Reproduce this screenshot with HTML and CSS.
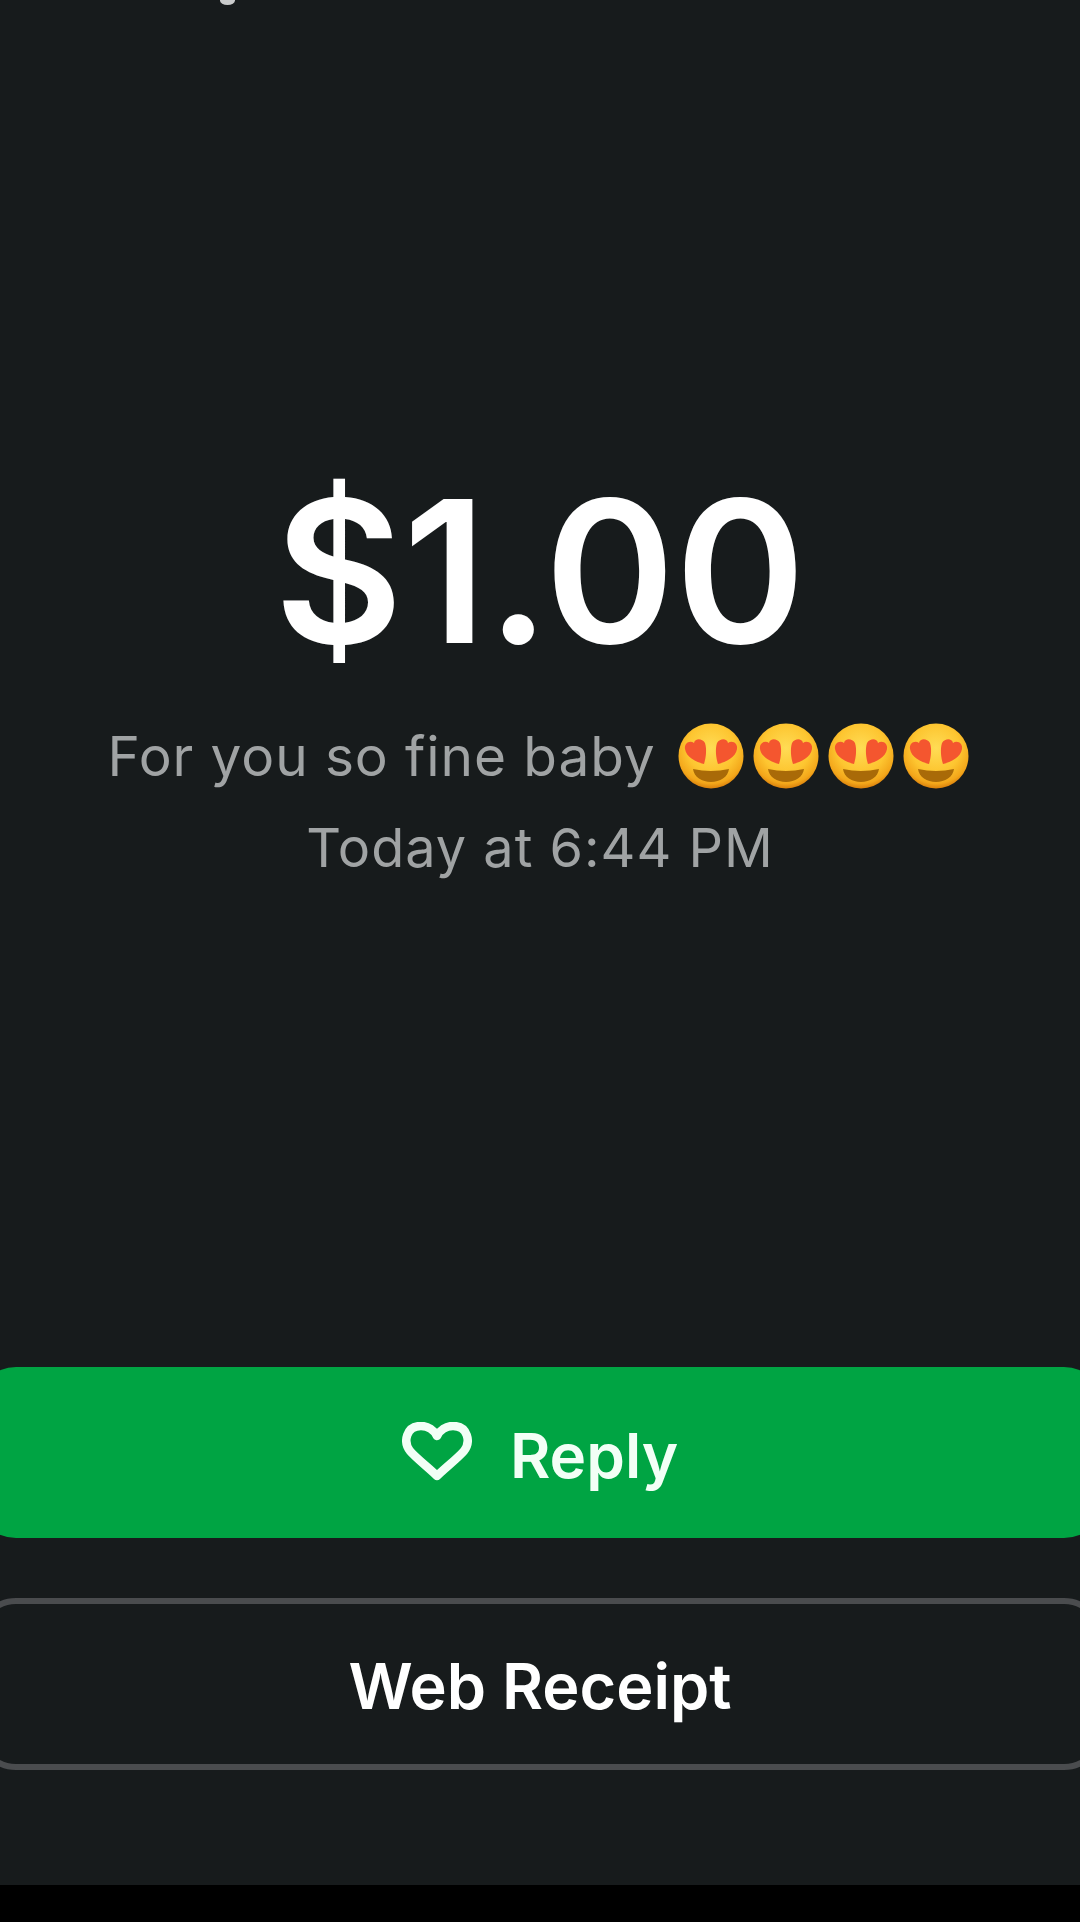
FILE: index.html
```html
<!DOCTYPE html>
<html lang="en">
<head>
<meta charset="utf-8">
<title>Payment</title>
<link rel="stylesheet" href="styles.css">
</head>
<body>
<svg width="0" height="0" class="defs" aria-hidden="true">
  <defs>
    <radialGradient id="face" cx="50%" cy="38%" r="62%">
      <stop offset="0" stop-color="#ffdc55"/>
      <stop offset="0.6" stop-color="#fdc530"/>
      <stop offset="0.88" stop-color="#f3a61a"/>
      <stop offset="1" stop-color="#d97f0c"/>
    </radialGradient>
    <symbol id="love" viewBox="0 0 66 66">
      <circle cx="33" cy="33" r="32.5" fill="url(#face)"/>
      <path d="M26 41C18 39 8 34 7 26C6 20 12 17 16 20C17 15 24 15 27 20C29 26 28 35 26 41Z" fill="#f4562f"/>
      <path d="M40 41C48 39 58 34 59 26C60 20 54 17 50 20C49 15 42 15 39 20C37 26 38 35 40 41Z" fill="#f4562f"/>
      <path d="M15 46Q33 50 51 46C50 54 42 59 33 59C24 59 16 54 15 46Z" fill="#a96a08"/>
    </symbol>
  </defs>
</svg>
<div class="screen">
  <span class="clipped-tail"></span>
  <main class="content">
    <h1 class="amount">$1.00</h1>
    <p class="note">
      <span>For you so fine baby</span>
      <span class="emojis">
        <svg class="emoji" role="img" aria-label="😍"><use href="#love"/></svg>
        <svg class="emoji" role="img" aria-label="😍"><use href="#love"/></svg>
        <svg class="emoji" role="img" aria-label="😍"><use href="#love"/></svg>
        <svg class="emoji" role="img" aria-label="😍"><use href="#love"/></svg>
      </span>
    </p>
    <p class="time">Today at 6:44 PM</p>
  </main>
  <div class="actions">
    <button class="btn btn-reply">
      <svg class="heart" viewBox="0 0 70 59" fill="none" stroke="currentColor" stroke-width="8.5" stroke-linejoin="round">
        <path d="M35 54C28 47 14 36 8 29C1 20 4 4 19 4C26 4 32 8 35 14C38 8 44 4 51 4C66 4 69 20 62 29C56 36 42 47 35 54Z"/>
      </svg>
      <span>Reply</span>
    </button>
    <button class="btn btn-receipt">Web Receipt</button>
  </div>
</div>
<div class="navbar"></div>
</body>
</html>
```
FILE: styles.css
```css
* { box-sizing: border-box; }
html, body { margin: 0; padding: 0; }
body {
  width: 1080px;
  height: 1922px;
  background: #000;
  font-family: Inter, "Liberation Sans", sans-serif;
  overflow: hidden;
  display: flex;
  flex-direction: column;
}
.defs { position: absolute; }
.screen {
  position: relative;
  height: 1885px;
  background: #171b1c;
  display: flex;
  flex-direction: column;
  overflow: hidden;
}
.clipped-tail {
  position: absolute;
  left: 220px;
  top: -4px;
  width: 15px;
  height: 9px;
  border-radius: 50%;
  background: #c9cbcb;
}
.content {
  padding-top: 451px;
  height: 1367px;
  display: flex;
  flex-direction: column;
  align-items: center;
}
.amount {
  margin: 0;
  color: #fff;
  font-size: 198px;
  font-weight: 600;
  line-height: 240px;
  letter-spacing: 0;
}
.note {
  margin: 25px 0 0;
  padding-right: 4px;
  display: flex;
  align-items: center;
  gap: 22px;
  color: #a0a3a4;
  font-size: 55px;
  line-height: 80px;
  letter-spacing: 0.9px;
}
.emojis { display: flex; gap: 9px; }
.emoji { width: 66px; height: 66px; display: block; }
.time {
  margin: 12px 0 0;
  color: #a0a3a4;
  font-size: 54px;
  line-height: 80px;
  letter-spacing: 1px;
}
.actions {
  display: flex;
  flex-direction: column;
  gap: 60px;
  margin: 0 -24px;
}
.btn {
  width: 100%;
  border: 0;
  padding: 0;
  font-family: inherit;
  font-weight: 600;
  color: #fff;
  display: flex;
  align-items: center;
  justify-content: center;
}
.btn-reply {
  height: 171px;
  border-radius: 40px;
  background: #00a443;
  color: #f2fff6;
  font-size: 62px;
  gap: 38px;
}
.heart { width: 70px; height: 59px; display: block; margin-bottom: 2px; }
.btn-reply span { position: relative; top: 3px; }
.btn-receipt {
  height: 172px;
  border-radius: 40px;
  background: transparent;
  border: 6px solid #4a4c4e;
  font-size: 63px;
  padding-top: 4px;
}
.navbar { flex: 1; background: #000; }
```
